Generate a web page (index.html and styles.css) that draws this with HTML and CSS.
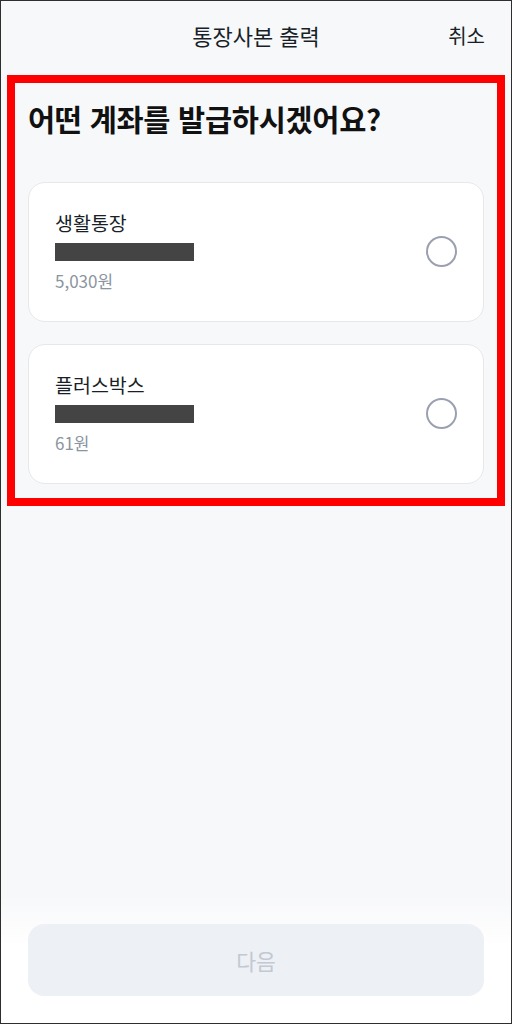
FILE: index.html
```html
<!DOCTYPE html>
<html lang="ko">
<head>
<meta charset="utf-8">
<title>통장사본 출력</title>
<link rel="stylesheet" href="styles.css">
</head>
<body>
<div class="screen">
  <header class="topbar">
    <div class="topbar-side"></div>
    <h1 class="topbar-title">통장사본 출력</h1>
    <div class="topbar-side topbar-right">취소</div>
  </header>
  <main class="highlight">
    <h2 class="question">어떤 계좌를 발급하시겠어요?</h2>
    <div class="accounts">
      <div class="card">
        <div class="card-info">
          <div class="card-name">생활통장</div>
          <div class="card-mask"></div>
          <div class="card-amount">5,030원</div>
        </div>
        <span class="radio"></span>
      </div>
      <div class="card">
        <div class="card-info">
          <div class="card-name">플러스박스</div>
          <div class="card-mask"></div>
          <div class="card-amount">61원</div>
        </div>
        <span class="radio"></span>
      </div>
    </div>
  </main>
  <div class="spacer"></div>
  <footer class="bottom">
    <button class="next" disabled>다음</button>
  </footer>
</div>
</body>
</html>
```

FILE: styles.css
```css
* { box-sizing: border-box; margin: 0; padding: 0; }
html, body { width: 512px; height: 1024px; }
body {
  font-family: "Noto Sans CJK KR", "Noto Sans", sans-serif;
  background: #f7f8fa;
  color: #191f28;
}
.screen {
  width: 512px;
  height: 1024px;
  border: 1px solid #2e2e2e;
  display: flex;
  flex-direction: column;
  background: #f7f8fa;
}
.topbar {
  height: 74px;
  flex: 0 0 auto;
  display: flex;
  align-items: center;
  justify-content: space-between;
  padding: 0 26px 6px 26px;
}
.topbar-side { width: 70px; font-size: 20px; color: #191f28; }
.topbar-right { text-align: right; }
.topbar-title {
  font-size: 22px;
  font-weight: 400;
  color: #191f28;
}
.highlight {
  margin: 0 6px;
  border: 8px solid #ff0000;
  padding: 18px 13px 14px 13px;
}
.question {
  font-size: 29.5px;
  font-weight: 700;
  line-height: 34px;
  letter-spacing: -0.3px;
  color: #111111;
}
.accounts {
  margin-top: 47px;
  display: flex;
  flex-direction: column;
  gap: 22px;
}
.card {
  background: #ffffff;
  border: 1px solid #e6e8ec;
  border-radius: 17px;
  padding: 27px 26px 28px 26px;
  display: flex;
  align-items: center;
  justify-content: space-between;
}
.card-info { display: flex; flex-direction: column; }
.card-name { font-size: 19.5px; line-height: 26px; color: #191f28; }
.card-mask {
  width: 139px;
  height: 18px;
  background: #444444;
  margin-top: 7px;
}
.card-amount {
  margin-top: 8px;
  font-size: 17px;
  line-height: 24px;
  color: #8b95a1;
}
.radio {
  width: 31px;
  height: 31px;
  border: 2.5px solid #9aa0b0;
  border-radius: 50%;
}
.spacer { flex: 1 1 auto; }
.bottom {
  padding: 30px 27px 27px 27px;
  background: linear-gradient(to bottom, rgba(255,255,255,0), #ffffff 40%);
}
.next {
  width: 100%;
  height: 72px;
  border: none;
  border-radius: 16px;
  background: #edf0f5;
  color: #c3c8d2;
  font-family: "Noto Sans CJK KR", "Noto Sans", sans-serif;
  font-size: 21.5px;
}
```
